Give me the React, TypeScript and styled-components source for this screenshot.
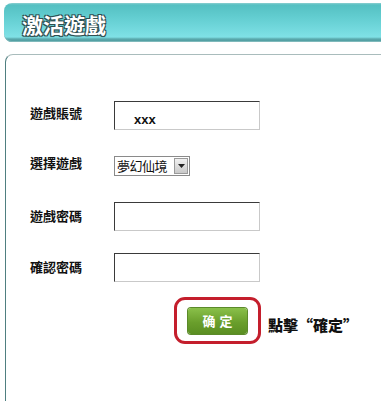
import React from "react";
import styled, { createGlobalStyle } from "styled-components";

const Global = createGlobalStyle`
  html, body { margin: 0; padding: 0; background: #fff; }
  body { font-family: "Noto Sans CJK TC", "Noto Sans CJK SC", sans-serif; overflow: hidden; }
`;

const Page = styled.div`
  width: 381px;
  height: 401px;
  padding-top: 3px;
  box-sizing: border-box;
  overflow: hidden;
`;

const Header = styled.div`
  margin-left: 4px;
  height: 39px;
  border-radius: 8px 0 0 8px;
  background: linear-gradient(#8ccfd0 0px, #55c0c2 2px, #62cdd0 14px, #79dde2 30px, #7fe1e6 34px, #5aa9ad 36px, #4e999c 39px);
  display: flex;
  align-items: center;
  padding-left: 18px;
  box-shadow: inset 0 -1px 0 #7fb9bb;
`;

const Title = styled.h1`
  margin: 0;
  font-size: 21px;
  font-weight: 700;
  color: #fff;
  padding-top: 2px;
  text-shadow: -1px -1px 0 #2f4f52, 1px -1px 0 #2f4f52, -1px 1px 0 #2f4f52, 1px 1px 0 #2f4f52, 0 1px 1px #2f4f52;
`;

const Panel = styled.div`
  margin-top: 12px;
  margin-left: 5px;
  height: 360px;
  border-left: 1px solid #4f7f80;
  border-top: 1px solid #a9bcbc;
  border-top-left-radius: 8px;
  box-sizing: border-box;
  padding-top: 46px;
  padding-left: 24px;
`;

const Form = styled.div`
  display: grid;
  grid-template-columns: 84px auto;
  grid-template-rows: 51px 50px 51px 44px;
  align-items: start;
`;

const Label = styled.div<{ $pt?: number }>`
  font-size: 13px;
  font-weight: 700;
  color: #111;
  line-height: 16px;
  padding-top: ${(p) => p.$pt ?? 5}px;
`;

const Input = styled.div`
  width: 146px;
  height: 29px;
  box-sizing: border-box;
  border-top: 1px solid #3a3a3a;
  border-left: 1px solid #3a3a3a;
  border-right: 1px solid #c9c9c9;
  border-bottom: 1px solid #c9c9c9;
  font-family: "Liberation Sans", Arial, sans-serif;
  font-weight: 700;
  font-size: 13px;
  color: #111;
  padding: 11px 0 0 19px;
  line-height: 14px;
`;

const Select = styled.div`
  margin-top: 4px;
  width: 76px;
  height: 20px;
  box-sizing: border-box;
  border: 1px solid #8a8a8a;
  display: flex;
  align-items: stretch;
`;

const SelectText = styled.div`
  flex: 1;
  font-size: 13px;
  line-height: 18px;
  padding-left: 2px;
  color: #111;
  white-space: nowrap;
  letter-spacing: -0.5px;
`;

const Arrow = styled.div`
  width: 14px;
  margin: 1px;
  box-sizing: border-box;
  border: 1px solid #9a9a9a;
  background: linear-gradient(#f0f0f0, #c9c9c9);
  display: flex;
  align-items: center;
  justify-content: center;
`;

const ActionRow = styled.div`
  display: flex;
  align-items: center;
  margin-left: 144px;
`;

const Ring = styled.div`
  width: 87px;
  height: 47px;
  box-sizing: border-box;
  border: 3px solid #c41e2c;
  border-radius: 11px;
  display: flex;
  align-items: center;
  justify-content: center;
`;

const Button = styled.div`
  width: 59px;
  height: 26px;
  border-radius: 3px;
  background: linear-gradient(#8ac04a, #6a9f2c 55%, #5a8e22);
  box-shadow: 0 0 0 1px #5b8a2a;
  color: #fff;
  font-size: 13px;
  font-weight: 700;
  letter-spacing: 4px;
  text-indent: 4px;
  display: flex;
  align-items: center;
  justify-content: center;
  font-family: "Noto Sans CJK SC", sans-serif;
`;

const Hint = styled.div`
  margin-left: 7px;
  margin-top: 8px;
  font-size: 15px;
  font-weight: 900;
  color: #111;
  white-space: nowrap;
`;

export default function App() {
  return (
    <Page>
      <Global />
      <Header>
        <Title>激活遊戲</Title>
      </Header>
      <Panel>
        <Form>
          <Label $pt={4}>遊戲賬號</Label>
          <Input>xxx</Input>
          <Label $pt={3}>選擇遊戲</Label>
          <Select>
            <SelectText>夢幻仙境</SelectText>
            <Arrow>
              <svg width="7" height="4" viewBox="0 0 7 4">
                <path d="M0 0 L7 0 L3.5 4 Z" fill="#222" />
              </svg>
            </Arrow>
          </Select>
          <Label $pt={6}>遊戲密碼</Label>
          <Input />
          <Label $pt={6}>確認密碼</Label>
          <Input />
        </Form>
        <ActionRow>
          <Ring>
            <Button>确定</Button>
          </Ring>
          <Hint>點擊“確定”</Hint>
        </ActionRow>
      </Panel>
    </Page>
  );
}
